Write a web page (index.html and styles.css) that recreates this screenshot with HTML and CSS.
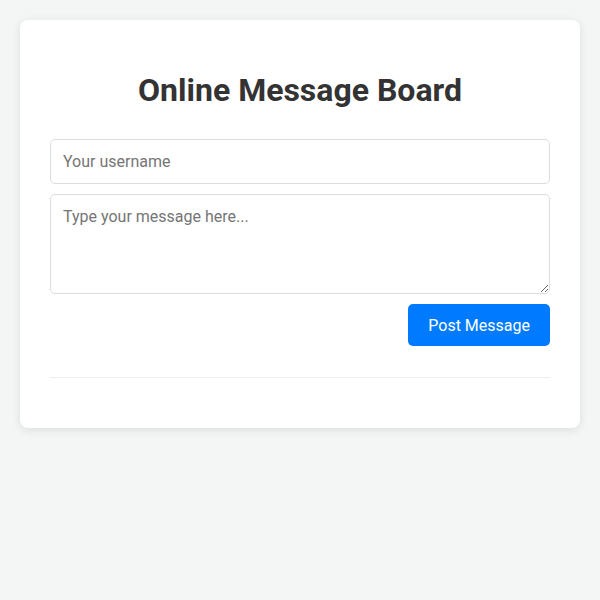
FILE: index.html
```html
<!DOCTYPE html>
<html lang="en">
<head>
<meta charset="utf-8">
<title>Online Message Board</title>
<link rel="stylesheet" href="styles.css">
</head>
<body>
<div class="container">
  <h1 class="title">Online Message Board</h1>
  <form class="post-form">
    <input class="field" type="text" placeholder="Your username">
    <textarea class="field message" placeholder="Type your message here..."></textarea>
    <div class="actions">
      <button type="button" class="btn">Post Message</button>
    </div>
  </form>
  <div class="messages"></div>
</div>
</body>
</html>
```
FILE: styles.css
```css
* { box-sizing: border-box; }
html, body { margin: 0; }
body {
  background: #f4f5f5;
  font-family: Roboto, "Liberation Sans", Arial, sans-serif;
  padding: 20px;
  color: #333;
}
.container {
  background: #fff;
  border-radius: 8px;
  box-shadow: 0 2px 10px rgba(0,0,0,0.1);
  padding: 30px;
}
.title {
  font-size: 32px;
  font-weight: 700;
  text-align: center;
  color: #333;
  margin: 21px 0 30px;
  line-height: 38px;
}
.post-form {
  display: flex;
  flex-direction: column;
}
.field {
  width: 100%;
  font-family: inherit;
  font-size: 16px;
  padding: 12px;
  border: 1px solid #ddd;
  border-radius: 5px;
  margin: 0 0 10px;
  color: #333;
  height: 45px;
  line-height: 19px;
}
.field::placeholder { color: #757575; }
.message {
  height: 100px;
  resize: vertical;
}
.actions {
  display: flex;
  justify-content: flex-end;
}
.btn {
  background: #007bff;
  color: #fff;
  border: none;
  border-radius: 5px;
  font-family: inherit;
  font-size: 16px;
  padding: 0 20px;
  height: 42px;
  cursor: pointer;
}
.messages {
  margin-top: 31px;
  border-top: 1px solid #eee;
  padding-top: 20px;
}
```
